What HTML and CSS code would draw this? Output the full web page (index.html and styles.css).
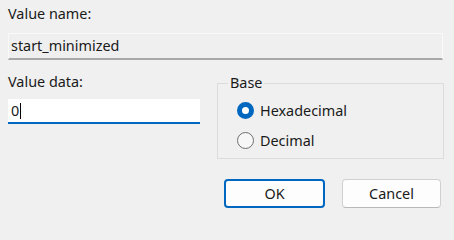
FILE: index.html
```html
<!DOCTYPE html>
<html>
<head>
<meta charset="utf-8">
<link rel="stylesheet" href="styles.css">
</head>
<body>
<div class="dialog">
  <div class="label">Value name:</div>
  <div class="name-field">start_minimized</div>
  <div class="row">
    <div class="left">
      <div class="label">Value data:</div>
      <div class="data-field"><span>0</span><span class="caret"></span></div>
    </div>
    <fieldset class="base">
      <legend>Base</legend>
      <div class="radio"><span class="dot checked"></span><span>Hexadecimal</span></div>
      <div class="radio"><span class="dot"></span><span>Decimal</span></div>
    </fieldset>
  </div>
  <div class="buttons">
    <div class="btn default">OK</div>
    <div class="btn">Cancel</div>
  </div>
</div>
</body>
</html>
```

FILE: styles.css
```css
html, body {
  margin: 0;
  padding: 0;
  background: #f0f0f0;
}
body {
  width: 454px;
  height: 226px;
  overflow: hidden;
  font-family: "Noto Sans", "Open Sans", sans-serif;
  font-size: 14.4px;
  color: #1a1a1a;
}
.dialog {
  padding: 4px 10px 0 8px;
}
.label {
  height: 20px;
  line-height: 20px;
}
.name-field {
  margin-top: 9px;
  height: 27px;
  box-sizing: border-box;
  border: 1px solid #f9f9f9;
  border-bottom: 2px solid #a8a8a8;
  background: #efefef;
  line-height: 24px;
  padding-left: 2px;
  width: 435px;
}
.row {
  display: flex;
  margin-top: 12px;
}
.left {
  width: 192px;
}
.data-field {
  margin-top: 7px;
  height: 25px;
  box-sizing: border-box;
  background: #ffffff;
  border-bottom: 2px solid #0067c0;
  line-height: 23px;
  padding-left: 3px;
  display: flex;
  align-items: center;
}
.caret {
  display: inline-block;
  width: 1px;
  height: 16px;
  background: #000;
  margin-left: 1px;
}
.base {
  margin: 1px 0 0 17px;
  width: 227px;
  height: 86px;
  box-sizing: border-box;
  border: 1px solid #dcdcdc;
  padding: 0 0 0 19px;
}
.base legend {
  padding: 0 2px;
  margin-left: -9px;
  line-height: 20px;
}
.radio {
  display: flex;
  align-items: center;
  height: 30px;
  gap: 6px;
}
.radio:first-of-type {
  margin-top: 2px;
}
.dot {
  width: 17px;
  height: 17px;
  box-sizing: border-box;
  border-radius: 50%;
  border: 1px solid #6e6e6e;
  background: #f7f7f7;
}
.dot.checked {
  border: 5px solid #0067c0;
  background: #ffffff;
}
.buttons {
  display: flex;
  justify-content: flex-end;
  gap: 17px;
  margin-top: 20px;
  padding-right: 3px;
}
.btn {
  width: 99px;
  height: 29px;
  box-sizing: border-box;
  border: 1px solid #d0d0d0;
  border-bottom-color: #b8b8b8;
  border-radius: 4px;
  background: #fdfdfd;
  display: flex;
  align-items: center;
  justify-content: center;
}
.btn.default {
  width: 101px;
  border: 2px solid #0067c0;
}
```
